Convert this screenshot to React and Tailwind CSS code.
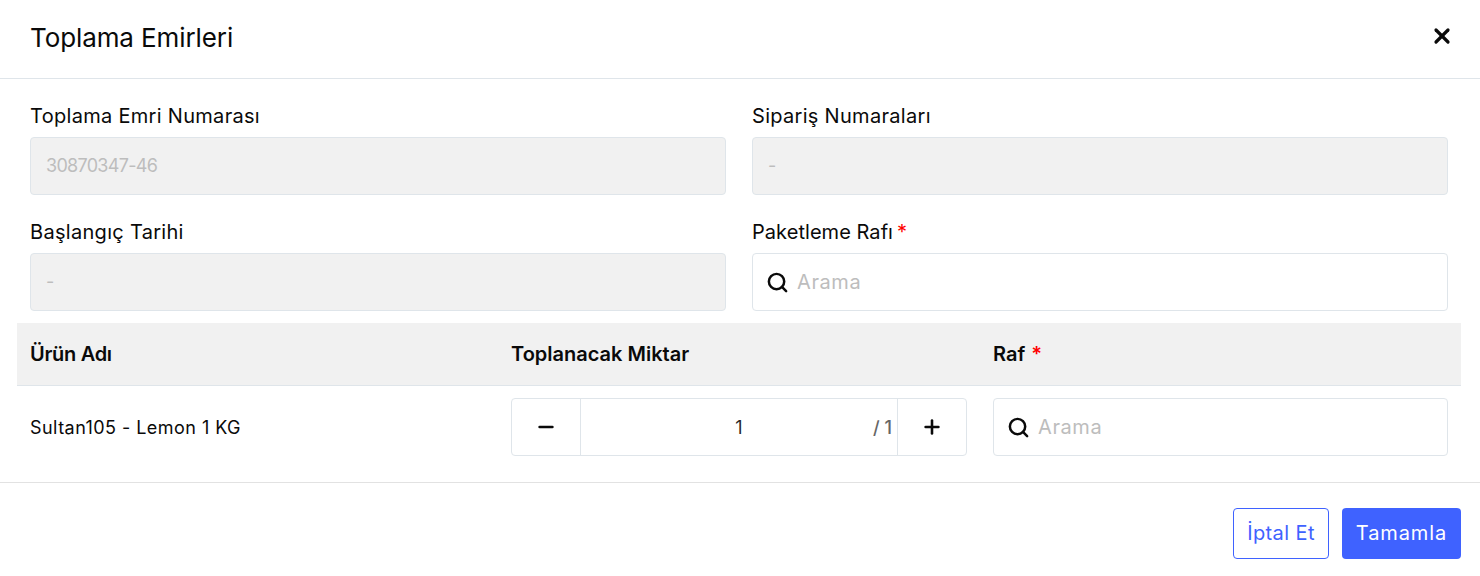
import { Search, X, Minus, Plus } from "lucide-react";

function Field({ label, value }) {
  return (
    <div className="flex flex-col">
      <label className="h-[22px] text-[20px] leading-[22px] tracking-[0.3px] text-[#0a0a0a]">{label}</label>
      <div className="mt-[10px] flex h-[58px] items-center rounded-[4px] border border-[#dfe5ea] bg-[#f1f1f1] px-[15px] pb-[2px] text-[18px] tracking-[-0.7px] text-[#bdbdbd]">
        {value}
      </div>
    </div>
  );
}

function SearchBox() {
  return (
    <div className="flex h-[58px] items-center rounded-[4px] border border-[#dfe5ea] bg-white pl-[13px] text-[20px] tracking-[0.6px] text-[#bdbdbd]">
      <Search size={23} strokeWidth={2.6} className="text-[#0a0a0a]" />
      <span className="ml-[8px]">Arama</span>
    </div>
  );
}

export default function App() {
  return (
    <div className="h-[576px] w-[1480px] overflow-hidden bg-white font-['Inter',sans-serif] text-[#0a0a0a]">
      <header className="flex h-[79px] items-center justify-between border-b border-[#dfe5ea] pb-[3px] pl-[30px] pr-[26px]">
        <h1 className="text-[26px] font-normal tracking-[-0.1px]">Toplama Emirleri</h1>
        <X size={24} strokeWidth={3.2} className="mb-[3px]" />
      </header>

      <div className="grid grid-cols-2 gap-x-[26px] gap-y-[26px] pl-[30px] pr-[32px] pt-[26px]">
        <Field label="Toplama Emri Numarası" value="30870347-46" />
        <Field label="Sipariş Numaraları" value="-" />
        <Field label="Başlangıç Tarihi" value="-" />
        <div className="flex flex-col">
          <label className="h-[22px] text-[20px] leading-[22px] tracking-[0.05px]">
            Paketleme Rafı<span className="ml-[4px] text-[#ff0000]">*</span>
          </label>
          <div className="mt-[10px]">
            <SearchBox />
          </div>
        </div>
      </div>

      <div className="mx-[17px] mr-[19px] mt-[12px]">
        <div className="grid h-[63px] grid-cols-[494px_482px_1fr] items-center border-b border-[#dfe5ea] bg-[#f1f1f1] text-[20px] font-semibold">
          <span className="pl-[13px] tracking-[-0.3px]">Ürün Adı</span>
          <span>Toplanacak Miktar</span>
          <span>
            Raf <span className="ml-[1px] text-[#ff0000]">*</span>
          </span>
        </div>
        <div className="grid grid-cols-[494px_482px_1fr] items-center pb-[26px] pt-[12px] text-[18px]">
          <span className="pl-[13px] tracking-[0.45px]">Sultan105 - Lemon 1 KG</span>
          <div className="flex h-[58px] w-[456px] items-center rounded-[4px] border border-[#dfe5ea]">
            <div className="flex h-full w-[69px] items-center justify-center border-r border-[#dfe5ea]">
              <Minus size={22} strokeWidth={2.8} />
            </div>
            <div className="flex h-full flex-1 items-center pr-[5px]">
              <span className="flex-1 pl-[24px] text-center text-[#2a2a2a]">1</span>
              <span className="font-medium text-[#666666]">/ 1</span>
            </div>
            <div className="flex h-full w-[69px] items-center justify-center border-l border-[#dfe5ea]">
              <Plus size={22} strokeWidth={2.8} />
            </div>
          </div>
          <div className="mr-[13px]">
            <SearchBox />
          </div>
        </div>
      </div>

      <footer className="flex justify-end gap-[13px] border-t border-[#e2e2e2] pr-[19px] pt-[25px]">
        <button className="h-[51px] w-[96px] rounded-[4px] border border-[#3f62ff] bg-white pb-[2px] text-[20px] tracking-[0.4px] text-[#3f62ff]">
          İptal Et
        </button>
        <button className="h-[51px] w-[119px] rounded-[4px] bg-[#3f62ff] pb-[2px] text-[20px] tracking-[0.9px] text-white">Tamamla</button>
      </footer>
    </div>
  );
}
